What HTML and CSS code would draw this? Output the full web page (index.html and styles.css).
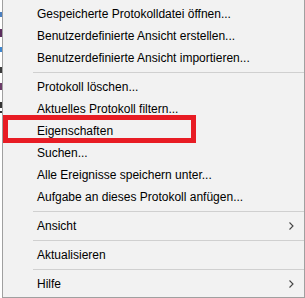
FILE: index.html
```html
<!DOCTYPE html>
<html lang="de">
<head>
    <meta charset="UTF-8">
    <meta name="viewport" content="width=device-width, initial-scale=1.0">
    <title>Kontextmenü</title>
    <link rel="stylesheet" href="styles.css">
</head>
<body>
    <div class="screen">
        <div class="behind">
            <span class="mark m1"></span>
            <span class="mark m2"></span>
            <span class="mark m3"></span>
            <span class="mark m4"></span>
            <span class="mark m5"></span>
            <span class="mark m6"></span>
            <span class="mark m7"></span>
        </div>
        <ul class="menu">
            <li class="item">Gespeicherte Protokolldatei öffnen...</li>
            <li class="item">Benutzerdefinierte Ansicht erstellen...</li>
            <li class="item">Benutzerdefinierte Ansicht importieren...</li>
            <li class="sep"></li>
            <li class="item">Protokoll löschen...</li>
            <li class="item">Aktuelles Protokoll filtern...</li>
            <li class="item marked">Eigenschaften<span class="highlight"></span></li>
            <li class="item">Suchen...</li>
            <li class="item">Alle Ereignisse speichern unter...</li>
            <li class="item">Aufgabe an dieses Protokoll anfügen...</li>
            <li class="sep"></li>
            <li class="item sub">Ansicht
                <svg class="arrow" width="5" height="8" viewBox="0 0 5 8"><polyline points="0.5,0.5 4,4 0.5,7.5" fill="none" stroke="#444" stroke-width="1.1"/></svg>
            </li>
            <li class="sep"></li>
            <li class="item">Aktualisieren</li>
            <li class="sep"></li>
            <li class="item sub">Hilfe
                <svg class="arrow" width="5" height="8" viewBox="0 0 5 8"><polyline points="0.5,0.5 4,4 0.5,7.5" fill="none" stroke="#444" stroke-width="1.1"/></svg>
            </li>
        </ul>
    </div>
</body>
</html>
```

FILE: styles.css
```css
* {
    margin: 0;
    padding: 0;
    box-sizing: border-box;
}

li {
    list-style: none;
}

body {
    background: #ffffff;
    font-family: "Liberation Sans", Arial, sans-serif;
    font-size: 12px;
    color: #000;
}

.screen {
    display: flex;
    width: 305px;
    height: 298px;
    overflow: hidden;
}

/* bits of the window behind the menu */
.behind {
    width: 2px;
    display: flex;
    flex-direction: column;
    background: #fff;
}

.mark {
    display: block;
    width: 2px;
}

.m1 { margin-top: 12px; height: 5px; background: #4a7fc0; }
.m2 { margin-top: 12px; height: 8px; background: #5b2d5e; }
.m3 { margin-top: 10px; height: 5px; background: #3d86d0; }
.m4 { margin-top: 15px; height: 6px; background: #3a3a3a; }
.m5 { margin-top: 10px; height: 7px; background: #6b3c68; }
.m6 { margin-top: 12px; height: 6px; background: #333; }
.m7 { margin-top: 3px; height: 2px; background: #333; }

.menu {
    flex: 1;
    background: #f2f2f2;
    border-left: 1px solid #a0a0a0;
    border-right: 1px solid #a0a0a0;
    border-bottom: 1px solid #a0a0a0;
    padding: 3px 0 3px 0;
}

.item {
    position: relative;
    height: 22px;
    line-height: 22px;
    padding-left: 34px;
    padding-right: 10px;
    white-space: nowrap;
}

.sub {
    display: flex;
    justify-content: space-between;
    align-items: center;
}

.arrow {
    display: block;
}

.sep {
    height: 1px;
    margin: 3px 0 3px 30px;
    background: #d0d0d0;
}

.highlight {
    position: absolute;
    left: 0;
    top: -5px;
    width: 193px;
    height: 28px;
    border: 5px solid #e81c24;
}
```
